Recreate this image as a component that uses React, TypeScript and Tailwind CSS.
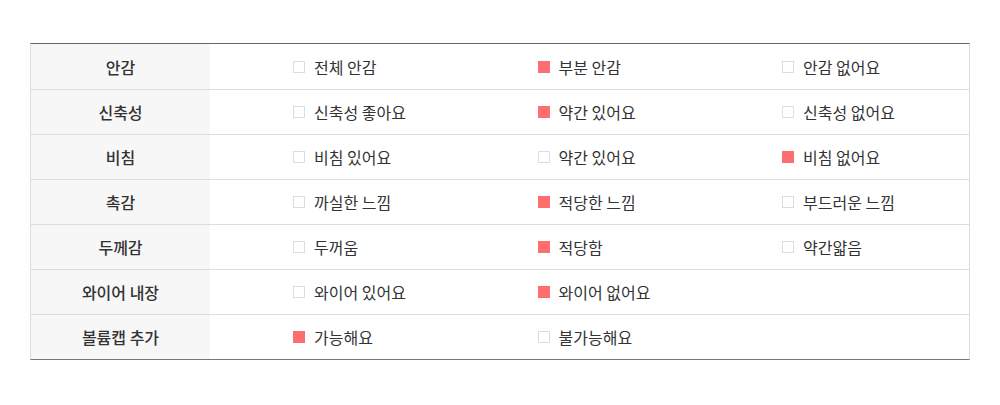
import React from "react";

type Option = { label: string; checked: boolean };

const rows: { title: string; options: Option[] }[] = [
  {
    title: "안감",
    options: [
      { label: "전체 안감", checked: false },
      { label: "부분 안감", checked: true },
      { label: "안감 없어요", checked: false },
    ],
  },
  {
    title: "신축성",
    options: [
      { label: "신축성 좋아요", checked: false },
      { label: "약간 있어요", checked: true },
      { label: "신축성 없어요", checked: false },
    ],
  },
  {
    title: "비침",
    options: [
      { label: "비침 있어요", checked: false },
      { label: "약간 있어요", checked: false },
      { label: "비침 없어요", checked: true },
    ],
  },
  {
    title: "촉감",
    options: [
      { label: "까실한 느낌", checked: false },
      { label: "적당한 느낌", checked: true },
      { label: "부드러운 느낌", checked: false },
    ],
  },
  {
    title: "두께감",
    options: [
      { label: "두꺼움", checked: false },
      { label: "적당함", checked: true },
      { label: "약간얇음", checked: false },
    ],
  },
  {
    title: "와이어 내장",
    options: [
      { label: "와이어 있어요", checked: false },
      { label: "와이어 없어요", checked: true },
    ],
  },
  {
    title: "볼륨캡 추가",
    options: [
      { label: "가능해요", checked: true },
      { label: "불가능해요", checked: false },
    ],
  },
];

const App: React.FC = () => {
  return (
    <div
      className="w-[1000px] h-[405px] bg-white pt-[43px] pl-[30px]"
      style={{ fontFamily: '"Noto Sans CJK KR", "Noto Sans", sans-serif' }}
    >
      <div className="w-[940px] border-t border-b border-t-[#666] border-b-[#777] border-x border-x-[#ddd]">
        {rows.map((row, i) => (
          <div
            key={row.title}
            className={`flex h-[45px] ${i > 0 ? "border-t border-[#ddd]" : ""}`}
          >
            <div className="w-[179px] shrink-0 bg-[#f7f7f7] flex items-center justify-center text-[16px] font-medium text-[#333]">
              {row.title}
            </div>
            <div className="flex flex-1 min-w-0 overflow-hidden items-center pl-[83px]">
              {row.options.map((opt) => (
                <div key={opt.label} className="w-[244.5px] shrink-0 flex items-center">
                  <span
                    className={`w-[12px] h-[12px] mr-[9px] ${
                      opt.checked ? "bg-[#ff6e6e]" : "border border-[#ddd] bg-white"
                    }`}
                  ></span>
                  <span className="text-[16px] text-[#333] leading-none">{opt.label}</span>
                </div>
              ))}
            </div>
          </div>
        ))}
      </div>
    </div>
  );
};

export default App;
